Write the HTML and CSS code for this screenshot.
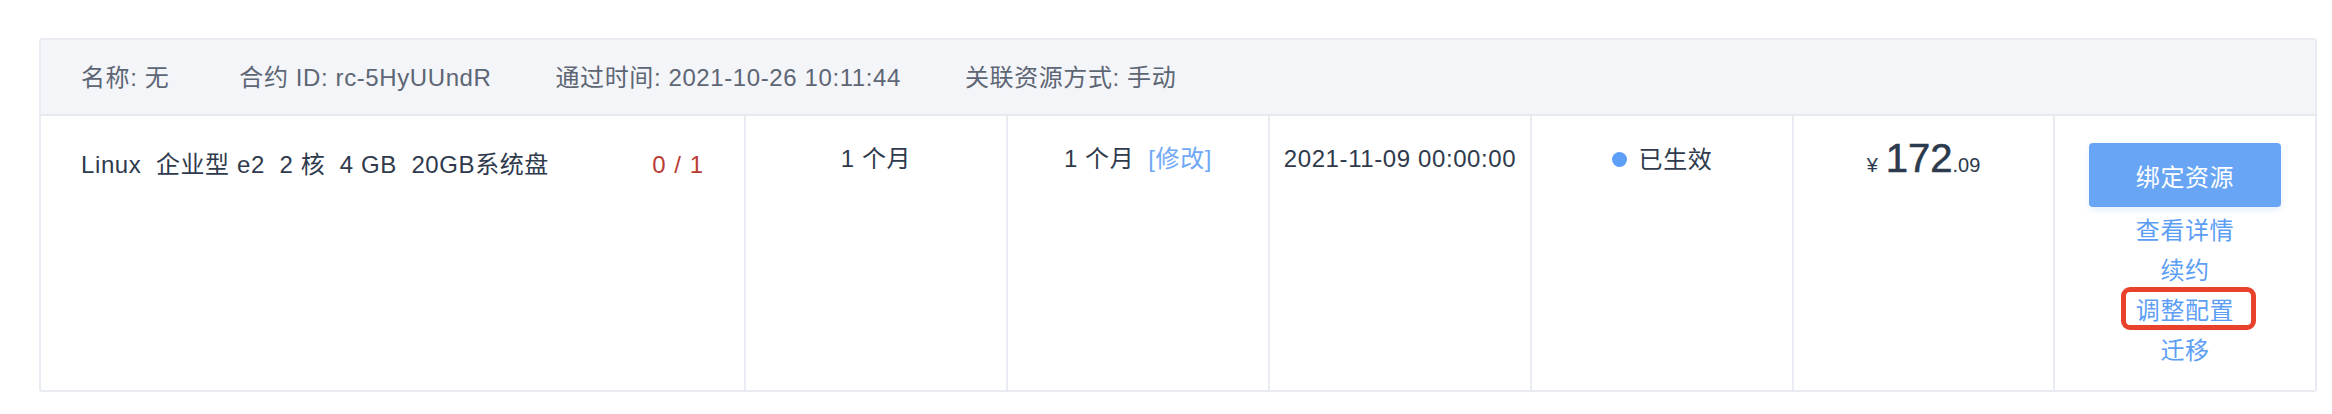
FILE: index.html
```html
<!DOCTYPE html>
<html lang="zh-CN">
<head>
<meta charset="utf-8">
<title>合约</title>
<link rel="stylesheet" href="styles.css">
</head>
<body>
<div class="page">
  <div class="contract">
    <div class="contract-head">
      <span class="meta meta-first">名称: 无</span>
      <span class="meta">合约 ID: rc-5HyUUndR</span>
      <span class="meta">通过时间: 2021-10-26 10:11:44</span>
      <span class="meta">关联资源方式: 手动</span>
    </div>
    <div class="contract-row">
      <div class="cell cell-spec">
        <span class="spec">Linux&nbsp;&nbsp;企业型 e2&nbsp;&nbsp;2 核&nbsp;&nbsp;4 GB&nbsp;&nbsp;20GB系统盘</span>
        <span class="count">0 / 1</span>
      </div>
      <div class="cell cell-center">1 个月</div>
      <div class="cell cell-center">1 个月<a class="edit">[修改]</a></div>
      <div class="cell cell-center">2021-11-09 00:00:00</div>
      <div class="cell cell-center"><span class="status"><span class="dot"></span>已生效</span></div>
      <div class="cell cell-center cell-price"><span class="price"><span class="cur">¥</span><span class="int">172</span><span class="dec">.09</span></span></div>
      <div class="cell cell-actions">
        <button class="bind">绑定资源</button>
        <a class="link">查看详情</a>
        <a class="link">续约</a>
        <a class="link link-mark">调整配置</a>
        <a class="link">迁移</a>
      </div>
    </div>
  </div>
</div>
</body>
</html>
```
FILE: styles.css
```css
html, body {
  margin: 0;
  padding: 0;
  background: #ffffff;
}
body {
  font-family: "Liberation Sans", "Noto Sans CJK SC", sans-serif;
  font-size: 24px;
  letter-spacing: 0.6px;
  color: #2f3a4d;
}
.page {
  padding: 38px 0 0 39px;
}
.contract {
  width: 2278px;
  box-sizing: border-box;
  border: 2px solid #e8ecf2;
  border-radius: 3px;
}
.contract-head {
  display: flex;
  align-items: center;
  gap: 64px;
  height: 76px;
  padding: 0 40px 4px;
  box-sizing: border-box;
  background: #f4f5f9;
  border-bottom: 2px solid #e6eaf0;
  color: #5d6674;
}
.meta-first {
  margin-right: 6px;
}
.contract-row {
  display: grid;
  grid-template-columns: 703px repeat(4, 262px) 261px 1fr;
  height: 274px;
}
.cell {
  box-sizing: border-box;
  border-left: 2px solid #e8ecf2;
  padding-top: 27px;
  line-height: 32px;
}
.cell-spec {
  border-left: none;
  display: flex;
  justify-content: space-between;
  padding: 33px 40px 0 40px;
}
.count {
  color: #b93b34;
  letter-spacing: 1px;
}
.cell-center {
  text-align: center;
}
.edit {
  color: #6ea8f6;
  margin-left: 14px;
}
.status {
  display: inline-flex;
  align-items: center;
}
.dot {
  width: 15px;
  height: 15px;
  border-radius: 50%;
  background: #5d9ef7;
  margin-right: 12px;
}
.cell-price {
  padding-top: 22px;
}
.price {
  display: inline-flex;
  align-items: baseline;
  color: #2c3a4d;
  letter-spacing: 0;
}
.cur {
  font-size: 20px;
  margin-right: 8px;
}
.int {
  font-size: 40px;
  line-height: 40px;
  -webkit-text-stroke: 0.6px #2c3a4d;
}
.dec {
  font-size: 20px;
}
.cell-actions {
  display: flex;
  flex-direction: column;
  align-items: center;
  padding-top: 27px;
}
.bind {
  width: 192px;
  height: 64px;
  border: none;
  border-radius: 4px;
  background: #68a5f5;
  color: #ffffff;
  font-family: inherit;
  font-size: 24px;
  letter-spacing: 0.6px;
  box-shadow: 0 3px 6px rgba(104, 165, 245, 0.18);
  margin-bottom: 4px;
}
.link {
  color: #5d9ef5;
  font-size: 24px;
  line-height: 40px;
}
.link-mark {
  position: relative;
}
.link-mark::after {
  content: "";
  position: absolute;
  left: -15px;
  right: -22px;
  top: -4px;
  bottom: 1px;
  border: 5px solid #e8422c;
  border-radius: 9px;
}
```
